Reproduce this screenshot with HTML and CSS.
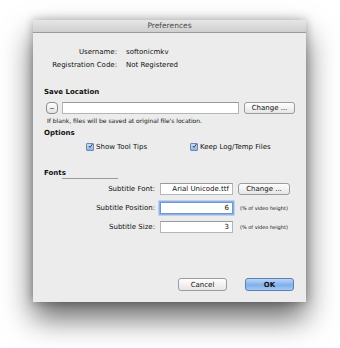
FILE: index.html
```html
<!DOCTYPE html>
<html lang="en">
<head>
    <meta charset="UTF-8">
    <meta name="viewport" content="width=device-width, initial-scale=1.0">
    <title>Preferences</title>
    <link rel="stylesheet" href="styles.css">
</head>
<body>
    <div class="window">
        <div class="titlebar">Preferences</div>
        <div class="content">
            <div class="info">
                <span class="label">Username:</span><span>softonicmkv</span>
                <span class="label">Registration Code:</span><span>Not Registered</span>
            </div>

            <div class="heading save-heading">Save Location</div>
            <div class="location-row">
                <button class="minus-btn">&minus;</button>
                <div class="field location-field"></div>
                <button class="btn change-btn">Change ...</button>
            </div>
            <div class="note">If blank, files will be saved at original file's location.</div>

            <div class="heading options-heading">Options</div>
            <div class="options-row">
                <label class="check first-check"><span class="box"><svg viewBox="0 0 8 8" width="8" height="8"><path d="M1.5 4.2 L3.3 6.2 L7.2 0.8" fill="none" stroke="#16284a" stroke-width="1.4"/></svg></span>Show Tool Tips</label>
                <label class="check"><span class="box"><svg viewBox="0 0 8 8" width="8" height="8"><path d="M1.5 4.2 L3.3 6.2 L7.2 0.8" fill="none" stroke="#16284a" stroke-width="1.4"/></svg></span>Keep Log/Temp Files</label>
            </div>

            <div class="fonts-heading">
                <span class="heading">Fonts</span>
                <span class="fonts-line"></span>
            </div>
            <div class="font-grid">
                <span class="label">Subtitle Font:</span>
                <div class="field value">Arial Unicode.ttf</div>
                <button class="btn font-change">Change ...</button>

                <span class="label">Subtitle Position:</span>
                <div class="field value focused">6</div>
                <span class="unit">(% of video height)</span>

                <span class="label">Subtitle Size:</span>
                <div class="field value">3</div>
                <span class="unit">(% of video height)</span>
            </div>

            <div class="actions">
                <button class="btn action-btn">Cancel</button>
                <button class="btn action-btn ok-btn">OK</button>
            </div>
        </div>
    </div>
</body>
</html>
```

FILE: styles.css
```css
body {
    margin: 0;
    padding: 0;
    min-height: 348px;
    background: #fff;
    font-family: 'DejaVu Sans', 'Liberation Sans', sans-serif;
    font-size: 7px;
    color: #111;
}

.window {
    margin: 20px 0 0 33px;
    width: 273px;
    height: 282px;
    background: #ececec;
    box-shadow: 0 16px 28px rgba(0, 0, 0, 0.6), 0 0 9px rgba(0, 0, 0, 0.3);
    display: flex;
    flex-direction: column;
}

.titlebar {
    height: 12px;
    line-height: 12px;
    text-align: center;
    color: #4a4a4a;
    font-size: 7.5px;
    background: linear-gradient(to bottom, #e6e6e6, #cfcfcf);
    border-bottom: 1px solid #9a9a9a;
}

.content {
    flex: 1;
    display: flex;
    flex-direction: column;
    padding: 13px 11px 0 11px;
}

.info {
    display: grid;
    grid-template-columns: 73px auto;
    column-gap: 9px;
    line-height: 13px;
}

.label {
    text-align: right;
}

.heading {
    font-weight: bold;
    line-height: 13px;
}

.save-heading {
    margin-top: 14px;
}

.location-row {
    display: flex;
    align-items: center;
    margin-top: 3px;
    height: 12px;
}

.minus-btn {
    width: 12px;
    height: 12px;
    margin-left: 2px;
    padding: 0;
    border: 1px solid #8c8c8c;
    border-radius: 4px;
    background: linear-gradient(to bottom, #fff, #e2e2e2);
    font-size: 8px;
    line-height: 9px;
    color: #333;
}

.field {
    height: 12px;
    box-sizing: border-box;
    background: #fff;
    border: 1px solid #b5b5b5;
    border-top-color: #999;
}

.location-field {
    margin-left: 4px;
    width: 177px;
}

.btn {
    height: 12px;
    padding: 0;
    box-sizing: border-box;
    border: 1px solid #9b9b9b;
    border-radius: 3px;
    background: linear-gradient(to bottom, #fefefe, #e6e6e6);
    font-family: inherit;
    font-size: 7px;
    color: #111;
    line-height: 10px;
}

.change-btn {
    margin-left: 5px;
    width: 51px;
}

.note {
    font-size: 6px;
    line-height: 10px;
    margin-top: 2px;
    padding-left: 3px;
}

.options-heading {
    margin-top: 1px;
}

.options-row {
    display: flex;
    height: 13px;
    align-items: center;
}

.check {
    display: flex;
    align-items: center;
}

.first-check {
    margin-left: 42px;
    width: 104px;
}

.box {
    width: 8px;
    height: 8px;
    box-sizing: border-box;
    margin-right: 2px;
    border: 1px solid #6f86b0;
    border-radius: 1px;
    background: linear-gradient(to bottom, #c9dcf5, #8fb3e6);
    display: flex;
    align-items: flex-end;
    justify-content: center;
    overflow: visible;
}

.box svg {
    margin-left: 1px;
}

.fonts-heading {
    display: flex;
    align-items: flex-start;
    margin-top: 14px;
    height: 13px;
}

.fonts-line {
    width: 56px;
    height: 1px;
    background: #9a9a9a;
    margin-top: 11px;
    margin-left: -4px;
}

.font-grid {
    display: grid;
    grid-template-columns: 111px 73px auto;
    column-gap: 5px;
    row-gap: 7px;
    align-items: center;
    margin-top: 3px;
}

.value {
    text-align: right;
    padding-right: 3px;
    line-height: 10px;
}

.focused {
    border-color: #6c96d4;
    box-shadow: 0 0 0 1.5px #8db3e8;
}

.font-change {
    width: 52px;
}

.unit {
    font-size: 5px;
    margin-left: 2px;
}

.actions {
    margin-top: auto;
    margin-bottom: 11px;
    display: flex;
    justify-content: flex-end;
    gap: 18px;
    padding-right: 1px;
}

.action-btn {
    width: 49px;
    height: 13px;
}

.ok-btn {
    border-color: #5b7fb8;
    background: linear-gradient(to bottom, #bcd6f6, #7fb0ec 55%, #a4c8f3);
    font-weight: bold;
}
```
